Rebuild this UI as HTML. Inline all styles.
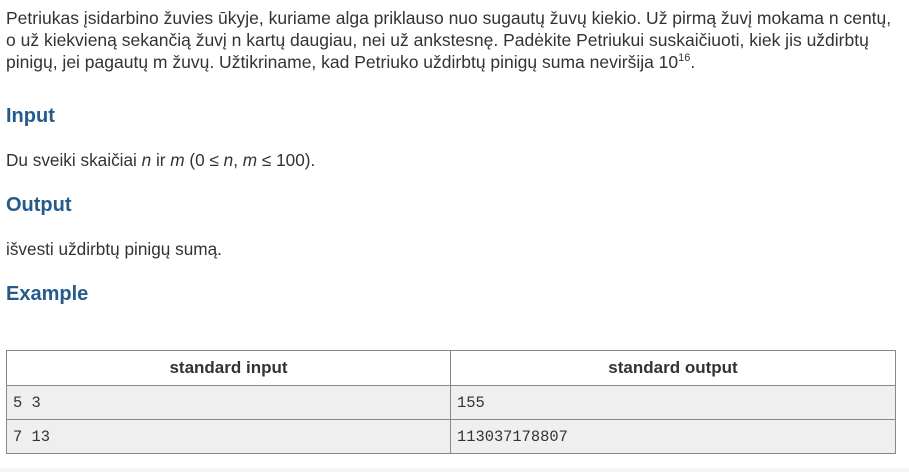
<!DOCTYPE html>
<html><head><style>
body{margin:0;width:909px;height:472px;background:#fff;font-family:"Liberation Sans",sans-serif;color:#333;position:relative;overflow:hidden}
.p{position:absolute;left:6px;font-size:17.2px;line-height:22px;margin:0;white-space:nowrap}
h3{position:absolute;left:6px;margin:0;font-size:20px;font-weight:bold;color:#255b8a;line-height:24px}
table{position:absolute;left:6px;top:350px;width:890px;border-collapse:collapse;font-size:17px}
td,th{border:1px solid #888;height:34px;padding:0 6px;box-sizing:border-box}
th{font-weight:bold;background:#fff}
td{background:#efefef;font-family:"Liberation Mono",monospace;font-size:15.4px}
.foot{position:absolute;left:0;top:468px;width:909px;height:4px;background:#f4f4f4}
</style></head><body>
<p class="p" style="top:7px;font-size:17.5px">Petriukas įsidarbino žuvies ūkyje, kuriame alga priklauso nuo sugautų žuvų kiekio. Už pirmą žuvį mokama n centų,<br>o už kiekvieną sekančią žuvį n kartų daugiau, nei už ankstesnę. Padėkite Petriukui suskaičiuoti, kiek jis uždirbtų<br>pinigų, jei pagautų m žuvų. Užtikriname, kad Petriuko uždirbtų pinigų suma neviršija 10<sup style="font-size:11px;line-height:0">16</sup>.</p>
<h3 style="top:104px">Input</h3>
<p class="p" style="top:149px">Du sveiki skaičiai <i>n</i> ir <i>m</i> (0 ≤ <i>n</i>, <i>m</i> ≤ 100).</p>
<h3 style="top:193px">Output</h3>
<p class="p" style="top:238px">išvesti uždirbtų pinigų sumą.</p>
<h3 style="top:282px">Example</h3>
<table>
<tr><th style="width:444px;height:35px">standard input</th><th>standard output</th></tr>
<tr><td>5 3</td><td>155</td></tr>
<tr><td>7 13</td><td>113037178807</td></tr>
</table>
<div class="foot"></div>
</body></html>
